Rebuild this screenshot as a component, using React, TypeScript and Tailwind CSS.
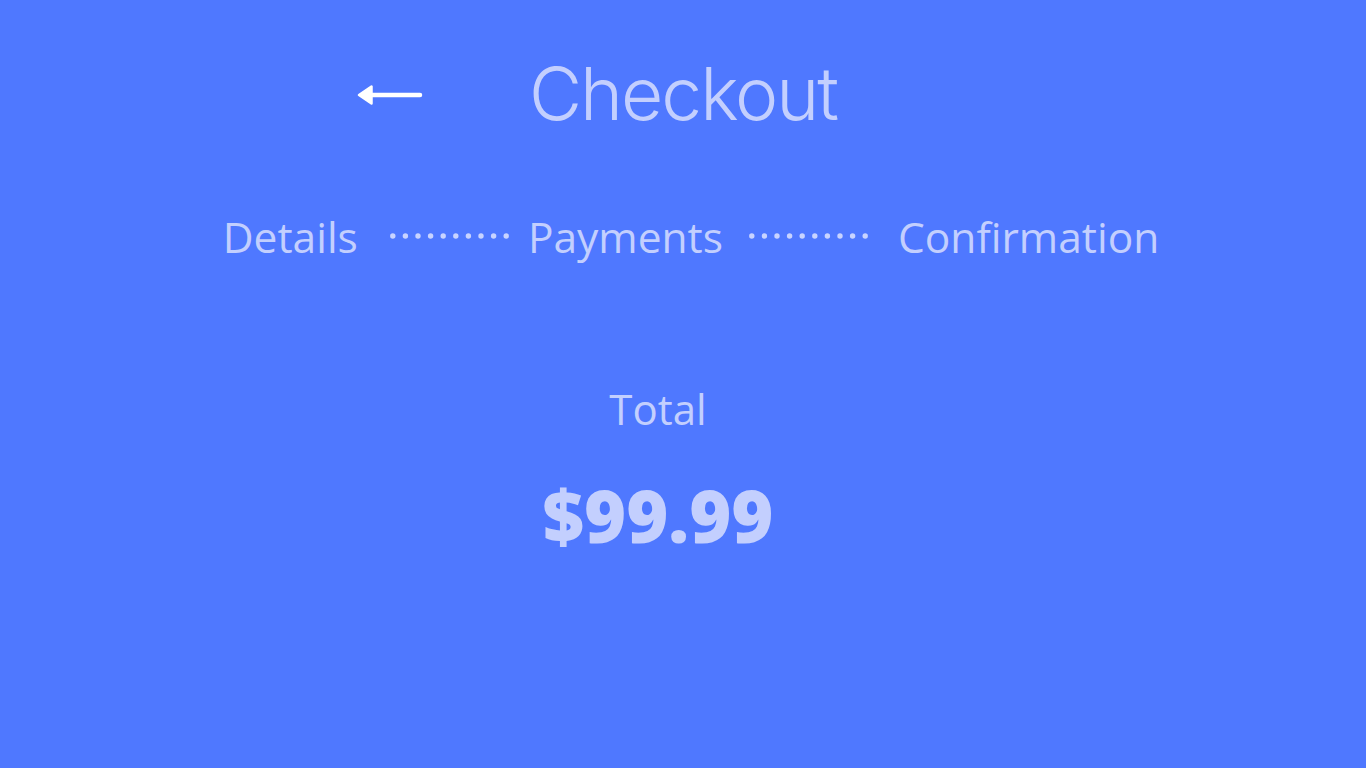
import React from "react";

function Dots() {
  return (
    <svg width="119" height="8" viewBox="0 0 119 8" className="block">
      {Array.from({ length: 10 }).map((_, i) => (
        <circle key={i} cx={2.8 + i * 12.6} cy="4" r="2.7" fill="#c8d3ff" />
      ))}
    </svg>
  );
}

export default function App() {
  return (
    <div className="w-full h-[768px] bg-[#4f78ff] text-[#c3cffe] overflow-hidden" style={{ fontFamily: '"Open Sans", sans-serif' }}>
      <div className="grid grid-cols-[1fr_auto_1fr] items-center pt-[46px]">
        <div className="flex justify-end pr-[107px]">
          <svg width="67" height="26" viewBox="0 0 67 26" className="mt-[1px] mr-[-2px]">
            <line x1="12" y1="13" x2="63" y2="13" stroke="#ffffff" strokeWidth="4.5" strokeLinecap="round" />
            <path d="M2 13 L14.5 4.5 L14.5 21.5 Z" fill="#ffffff" stroke="#ffffff" strokeWidth="2.5" strokeLinejoin="round" />
          </svg>
        </div>
        <div className="text-[73px] font-light leading-[96px] tracking-[-2px]" style={{ fontFamily: "Inter, sans-serif" }}>
          Checkout
        </div>
        <div />
      </div>
      <div className="flex items-center justify-center mt-[67px] text-[42.5px] leading-[56px] pl-[16px]">
        <span>Details</span>
        <span className="ml-[32px] mr-[19px] mt-[-2px]"><Dots /></span>
        <span>Payments</span>
        <span className="ml-[26px] mr-[30px] mt-[-2px]"><Dots /></span>
        <span>Confirmation</span>
      </div>
      <div className="flex flex-col items-center mt-[116px] pr-[50px]">
        <div className="text-[42px] leading-[56px]">Total</div>
        <div className="text-[72px] font-extrabold leading-[100px] mt-[28px]">$99.99</div>
      </div>
    </div>
  );
}
